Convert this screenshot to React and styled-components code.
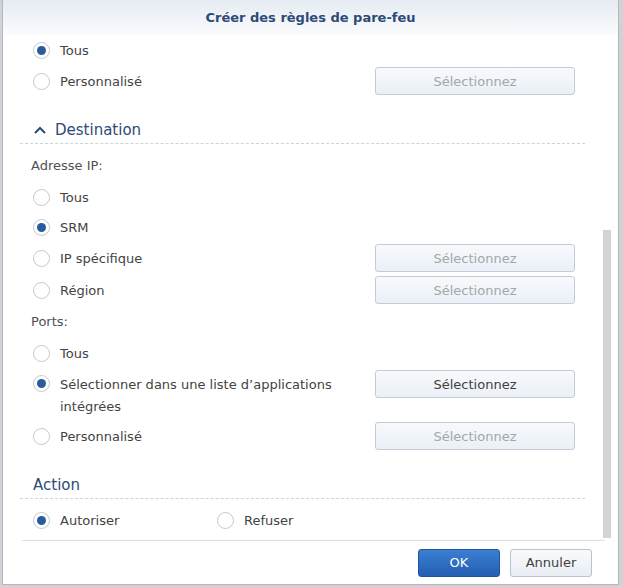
import React from 'react'
import styled, { createGlobalStyle } from 'styled-components'

const GlobalStyle = createGlobalStyle`
  html, body {
    margin: 0;
    padding: 0;
    background: #cfd3d8;
  }
  body {
    font-family: "DejaVu Sans", Verdana, sans-serif;
    font-size: 13px;
    color: #434343;
  }
`

const Radio = ({ checked, label, children, wide }) => (
  <Row>
    <Option wide={wide}>
      <Dot checked={checked} />
      <Label>{label}</Label>
    </Option>
    {children}
  </Row>
)

const SelectBtn = ({ disabled }) => (
  <PickBtn disabled={disabled}>Sélectionnez</PickBtn>
)

const Chevron = () => (
  <svg width="12" height="8" viewBox="0 0 12 8">
    <polyline points="1,7 6,2 11,7" fill="none" stroke="#2d4b76" strokeWidth="2" />
  </svg>
)

const App = () => (
  <>
    <GlobalStyle />
    <Window>
      <Header>Créer des règles de pare-feu</Header>
      <Body>
        <Section>
          <Radio checked label="Tous" />
          <Radio label="Personnalisé">
            <SelectBtn disabled />
          </Radio>
        </Section>

        <Heading>
          <Chevron />
          Destination
        </Heading>
        <Section>
          <FieldLabel>Adresse IP:</FieldLabel>
          <Radio label="Tous" />
          <Radio checked label="SRM" />
          <Radio label="IP spécifique">
            <SelectBtn disabled />
          </Radio>
          <Radio label="Région">
            <SelectBtn disabled />
          </Radio>
          <FieldLabel small>Ports:</FieldLabel>
          <Radio label="Tous" />
          <TallRow>
            <Option wide>
              <Dot checked />
              <Label>Sélectionner dans une liste d’applications intégrées</Label>
            </Option>
            <SelectBtn />
          </TallRow>
          <Radio label="Personnalisé">
            <SelectBtn disabled />
          </Radio>
        </Section>

        <Heading plain>Action</Heading>
        <ActionRow>
          <Radio checked label="Autoriser" />
          <Radio label="Refuser" />
        </ActionRow>
        <Thumb />
      </Body>
      <Footer>
        <FooterBtn primary>OK</FooterBtn>
        <FooterBtn>Annuler</FooterBtn>
      </Footer>
    </Window>
  </>
)

export default App

const Window = styled.div`
  margin-left: 2px;
  width: 617px;
  height: 585px;
  box-sizing: border-box;
  border: 1px solid #b4b8bd;
  border-top: none;
  background: #fff;
  display: flex;
  flex-direction: column;
`
const Header = styled.div`
  height: 35px;
  flex-shrink: 0;
  line-height: 35px;
  text-align: center;
  font-weight: bold;
  font-size: 13px;
  color: #2d4b76;
  background: linear-gradient(#e5ebf2, #fbfcfd);
`
const Body = styled.div`
  position: relative;
  flex: 1;
  padding: 0 0 0 17px;
  overflow: hidden;
`
const Section = styled.div`
  width: 565px;
  display: flex;
  flex-direction: column;
`
const Row = styled.div`
  display: flex;
  align-items: center;
  min-height: 30px;
  padding-left: 13px;
  padding-right: 10px;
  &:has(button) {
    min-height: 32px;
  }
`
const TallRow = styled(Row)`
  align-items: flex-start;
  padding-top: 2px;
  padding-bottom: 2px;
`
const Option = styled.div`
  display: flex;
  align-items: center;
  gap: 10px;
  flex: ${p => (p.wide ? 1 : 'none')};
  width: 161px;
  ${TallRow} & {
    align-items: flex-start;
    padding-top: 2px;
    padding-right: 10px;
  }
`
const Dot = styled.span`
  flex-shrink: 0;
  width: 17px;
  height: 17px;
  box-sizing: border-box;
  border-radius: 50%;
  border: 1px solid #c5c8cc;
  background: #fff;
  position: relative;
  ${TallRow} & {
    margin-top: 3px;
  }
  &::after {
    content: "";
    display: ${p => (p.checked ? 'block' : 'none')};
    position: absolute;
    left: 3px;
    top: 3px;
    width: 9px;
    height: 9px;
    border-radius: 50%;
    background: #2a5b9f;
  }
`
const Label = styled.span`
  line-height: 22px;
  margin-top: 2px;
`
const PickBtn = styled.button`
  margin-left: auto;
  width: 200px;
  height: 28px;
  flex-shrink: 0;
  box-sizing: border-box;
  border: 1px solid #c3ccd6;
  border-radius: 3px;
  background: linear-gradient(#f7f9fc, #ebf0f6);
  font-family: inherit;
  font-size: 13px;
  color: ${p => (p.disabled ? '#a3a7ab' : '#404040')};
`
const Heading = styled.div`
  width: 565px;
  box-sizing: border-box;
  margin-top: 18px;
  height: 29px;
  padding-top: 2px;
  display: flex;
  align-items: center;
  gap: 9px;
  padding-left: ${p => (p.plain ? '13px' : '14px')};
  border-bottom: 1px dashed #cfd3d8;
  font-size: 15px;
  color: #2d4b76;
`
const FieldLabel = styled.div`
  padding-left: 11px;
  line-height: 20px;
  margin: ${p => (p.small ? '6px 0 6px' : '12px 0 6px')};
  color: #505050;
`
const ActionRow = styled.div`
  display: flex;
  margin-top: 6px;
`
const Thumb = styled.div`
  position: absolute;
  right: 7px;
  top: 195px;
  bottom: 2px;
  width: 8px;
  background: #d4d4d4;
`
const Footer = styled.div`
  flex-shrink: 0;
  height: 44px;
  box-sizing: border-box;
  margin-left: 19px;
  margin-right: 13px;
  border-top: 1px solid #dde1e5;
  display: flex;
  align-items: center;
  justify-content: flex-end;
  gap: 10px;
  padding-right: 13px;
`
const FooterBtn = styled.button`
  width: 82px;
  height: 28px;
  box-sizing: border-box;
  border-radius: 3px;
  font-family: inherit;
  font-size: 13px;
  border: 1px solid ${p => (p.primary ? '#1f56a0' : '#b9c3ce')};
  color: ${p => (p.primary ? '#fff' : '#404040')};
  background: ${p =>
    p.primary
      ? 'linear-gradient(#3b7fd2, #245fb3)'
      : 'linear-gradient(#f9fafc, #e9eef4)'};
`
